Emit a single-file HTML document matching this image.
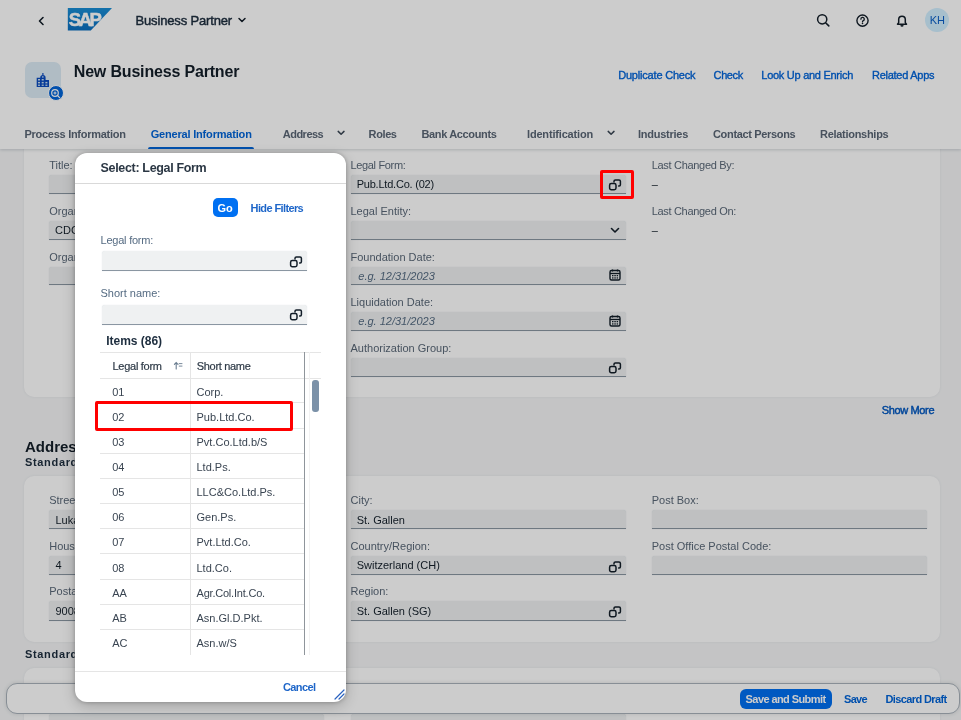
<!DOCTYPE html>
<html><head><meta charset="utf-8">
<style>
*{box-sizing:border-box;margin:0;padding:0}
html,body{width:961px;height:720px;overflow:hidden}
body{position:relative;background:#f5f6f7;font-family:"Liberation Sans",sans-serif;color:#131e29}
.a{position:absolute}
.t{position:absolute;white-space:nowrap}
.panel{position:absolute;background:#fff;border-radius:10px;box-shadow:0 0 3px rgba(34,53,72,.08)}
.inp{position:absolute;background:#eff1f2;border-radius:3px 3px 0 0;border-bottom:1px solid #8a96a2;box-shadow:0 0 1px rgba(85,107,129,.25),0 1px 0 rgba(255,255,255,.35)}
.ico{position:absolute}
#page,#dlg{will-change:transform}
#overlay{position:absolute;left:0;top:0;width:961px;height:720px;background:rgba(0,0,0,.2)}
#dlg{position:absolute;left:75px;top:153px;width:271px;height:549px;background:#fff;border-radius:12px;box-shadow:0 0 4px rgba(0,0,0,.25),0 4px 14px rgba(0,0,0,.2);overflow:hidden}
#dlg .t{}
.red{position:absolute;border:3px solid #f00;border-radius:2px}
</style></head>
<body>
<!-- page background content -->
<div id="page" class="a" style="left:0;top:0;width:961px;height:720px">
  <!-- panels -->
  <div class="panel" style="left:24px;top:120px;width:916px;height:277px"></div>
  <div class="panel" style="left:24px;top:476px;width:916px;height:166px"></div>
  <div class="panel" style="left:24px;top:668px;width:916px;height:80px"></div>

  <!-- section 1 inputs -->
  <div class="inp" style="left:49px;top:175.0px;width:275px;height:18.8px"></div>
  <div class="inp" style="left:49px;top:220.8px;width:275px;height:18.8px"></div>
  <div class="inp" style="left:49px;top:266.6px;width:275px;height:18.8px"></div>
  <div class="inp" style="left:351px;top:175.0px;width:275px;height:18.8px"></div>
  <div class="inp" style="left:351px;top:220.8px;width:275px;height:18.8px"></div>
  <div class="inp" style="left:351px;top:266.6px;width:275px;height:18.8px"></div>
  <div class="inp" style="left:351px;top:312.4px;width:275px;height:18.8px"></div>
  <div class="inp" style="left:351px;top:358.2px;width:275px;height:18.8px"></div>

  <!-- address inputs -->
  <div class="inp" style="left:49px;top:509.8px;width:275px;height:19.5px"></div>
  <div class="inp" style="left:49px;top:555.5px;width:275px;height:19.5px"></div>
  <div class="inp" style="left:49px;top:601.2px;width:275px;height:19.5px"></div>
  <div class="inp" style="left:351px;top:509.8px;width:275px;height:19.5px"></div>
  <div class="inp" style="left:351px;top:555.5px;width:275px;height:19.5px"></div>
  <div class="inp" style="left:351px;top:601.2px;width:275px;height:19.5px"></div>
  <div class="inp" style="left:652px;top:509.8px;width:275px;height:19.5px"></div>
  <div class="inp" style="left:652px;top:555.5px;width:275px;height:19.5px"></div>
  <!-- panel3 input peek -->
  <div class="inp" style="left:351px;top:714px;width:275px;height:20px"></div>
  <div class="inp" style="left:49px;top:714px;width:275px;height:20px"></div>

  <!-- page icons -->
  <svg class="ico" style="left:607px;top:177px" width="16" height="16" viewBox="0 0 16 16"><path d="M7 5V4.3a1.4 1.4 0 0 1 1.4-1.4H12a1.4 1.4 0 0 1 1.4 1.4V7.8a1.2 1.2 0 0 1-1.2 1.2H11.6" fill="none" stroke="#131e29" stroke-width="1.5" stroke-linecap="round"/><rect x="2.6" y="6.6" width="6.4" height="6.2" rx="1.7" fill="none" stroke="#131e29" stroke-width="1.5"/></svg>
  <svg class="ico" style="left:608px;top:222.5px" width="14" height="14" viewBox="0 0 14 14"><path d="M3.5 5.5l3.5 3.5 3.5-3.5" fill="none" stroke="#131e29" stroke-width="1.6" stroke-linecap="round" stroke-linejoin="round"/></svg>
  <svg class="ico" style="left:608px;top:268px" width="14" height="14" viewBox="0 0 14 14"><rect x="2" y="2.5" width="10" height="9.5" rx="1.5" fill="none" stroke="#131e29" stroke-width="1.4"/><path d="M2 5.5h10" stroke="#131e29" stroke-width="1.4"/><path d="M4.5 1.5v2M9.5 1.5v2" stroke="#131e29" stroke-width="1.3"/><rect x="4" y="7" width="1.5" height="1.3" fill="#131e29"/><rect x="6.3" y="7" width="1.5" height="1.3" fill="#131e29"/><rect x="8.6" y="7" width="1.5" height="1.3" fill="#131e29"/><rect x="4" y="9.3" width="1.5" height="1.3" fill="#131e29"/><rect x="6.3" y="9.3" width="1.5" height="1.3" fill="#131e29"/><rect x="8.6" y="9.3" width="1.5" height="1.3" fill="#131e29"/></svg>
  <svg class="ico" style="left:608px;top:313.5px" width="14" height="14" viewBox="0 0 14 14"><rect x="2" y="2.5" width="10" height="9.5" rx="1.5" fill="none" stroke="#131e29" stroke-width="1.4"/><path d="M2 5.5h10" stroke="#131e29" stroke-width="1.4"/><path d="M4.5 1.5v2M9.5 1.5v2" stroke="#131e29" stroke-width="1.3"/><rect x="4" y="7" width="1.5" height="1.3" fill="#131e29"/><rect x="6.3" y="7" width="1.5" height="1.3" fill="#131e29"/><rect x="8.6" y="7" width="1.5" height="1.3" fill="#131e29"/><rect x="4" y="9.3" width="1.5" height="1.3" fill="#131e29"/><rect x="6.3" y="9.3" width="1.5" height="1.3" fill="#131e29"/><rect x="8.6" y="9.3" width="1.5" height="1.3" fill="#131e29"/></svg>
  <svg class="ico" style="left:607px;top:359.5px" width="16" height="16" viewBox="0 0 16 16"><path d="M7 5V4.3a1.4 1.4 0 0 1 1.4-1.4H12a1.4 1.4 0 0 1 1.4 1.4V7.8a1.2 1.2 0 0 1-1.2 1.2H11.6" fill="none" stroke="#131e29" stroke-width="1.5" stroke-linecap="round"/><rect x="2.6" y="6.6" width="6.4" height="6.2" rx="1.7" fill="none" stroke="#131e29" stroke-width="1.5"/></svg>
  <svg class="ico" style="left:607px;top:558.5px" width="16" height="16" viewBox="0 0 16 16"><path d="M7 5V4.3a1.4 1.4 0 0 1 1.4-1.4H12a1.4 1.4 0 0 1 1.4 1.4V7.8a1.2 1.2 0 0 1-1.2 1.2H11.6" fill="none" stroke="#131e29" stroke-width="1.5" stroke-linecap="round"/><rect x="2.6" y="6.6" width="6.4" height="6.2" rx="1.7" fill="none" stroke="#131e29" stroke-width="1.5"/></svg>
  <svg class="ico" style="left:607px;top:604px" width="16" height="16" viewBox="0 0 16 16"><path d="M7 5V4.3a1.4 1.4 0 0 1 1.4-1.4H12a1.4 1.4 0 0 1 1.4 1.4V7.8a1.2 1.2 0 0 1-1.2 1.2H11.6" fill="none" stroke="#131e29" stroke-width="1.5" stroke-linecap="round"/><rect x="2.6" y="6.6" width="6.4" height="6.2" rx="1.7" fill="none" stroke="#131e29" stroke-width="1.5"/></svg>

  <!-- header -->
  <div class="a" style="left:0;top:0;width:961px;height:149px;background:#fff;box-shadow:0 1px 3px rgba(34,53,72,.2)"></div>
  <!-- back arrow -->
  <svg class="ico" style="left:35px;top:14px" width="12" height="14" viewBox="0 0 12 14"><path d="M8 3.5L4.5 7 8 10.5" fill="none" stroke="#131e29" stroke-width="1.6" stroke-linecap="round" stroke-linejoin="round"/></svg>
  <!-- SAP logo -->
  <svg class="ico" style="left:67px;top:8px" width="46" height="23" viewBox="0 0 46 23"><defs><linearGradient id="sg" x1="0" y1="0" x2="0" y2="1"><stop offset="0" stop-color="#1a8fd6"/><stop offset="1" stop-color="#0b6fc0"/></linearGradient></defs><path d="M0.8 0H45L23.8 22.5H0.8Z" fill="url(#sg)"/><text x="1.7" y="18.4" font-family="Liberation Sans" font-weight="700" font-size="18.5" letter-spacing="-2.4" fill="#fff" stroke="#fff" stroke-width="0.5">SAP</text></svg>
  <svg class="ico" style="left:236px;top:14px" width="12" height="12" viewBox="0 0 12 12"><path d="M3 4.5l3 3 3-3" fill="none" stroke="#131e29" stroke-width="1.5" stroke-linecap="round" stroke-linejoin="round"/></svg>
  <!-- shell icons -->
  <svg class="ico" style="left:815px;top:12px" width="16" height="16" viewBox="0 0 16 16"><circle cx="7.2" cy="7.3" r="4.6" fill="none" stroke="#131e29" stroke-width="1.5"/><path d="M10.6 10.7l3.2 3.2" stroke="#131e29" stroke-width="1.6" stroke-linecap="round"/></svg>
  <svg class="ico" style="left:854px;top:12px" width="16" height="16" viewBox="0 0 16 16"><circle cx="8.5" cy="8.6" r="5.6" fill="none" stroke="#131e29" stroke-width="1.4"/><path d="M6.9 7.2a1.7 1.7 0 1 1 2.4 1.5c-.6.3-.8.6-.8 1.2" fill="none" stroke="#131e29" stroke-width="1.3" stroke-linecap="round"/><circle cx="8.5" cy="11.5" r=".8" fill="#131e29"/></svg>
  <svg class="ico" style="left:894px;top:12px" width="16" height="16" viewBox="0 0 16 16"><path d="M3.5 12.2h9l-1.2-1.6V7.5a3.3 3.3 0 0 0-6.6 0v3.1z" fill="none" stroke="#131e29" stroke-width="1.5" stroke-linejoin="round"/><path d="M6.8 13.3a1.3 1.3 0 0 0 2.4 0" fill="#131e29" stroke="#131e29" stroke-width="1.3"/></svg>
  <div class="a" style="left:925px;top:7.5px;width:24px;height:24px;border-radius:50%;background:#d1efff"></div>

  <!-- object header tile -->
  <div class="a" style="left:25px;top:62px;width:35.5px;height:35.5px;border-radius:7px;background:#dcebf5"></div>
  <svg class="ico" style="left:35px;top:72px" width="15" height="16" viewBox="0 0 15 16"><path d="M1.7 5.8H5.2A2.7 2.7 0 0 1 10.6 5.8V8H14V15H1.7Z" fill="#0a4bc0"/><path d="M7.9 1V3" stroke="#0a4bc0" stroke-width="1.2"/><g fill="#c8dff0"><rect x="3" y="7" width="2" height="1.5"/><rect x="6.7" y="7" width="2" height="1.5"/><rect x="3" y="9.9" width="2" height="1.5"/><rect x="6.7" y="9.9" width="2" height="1.5"/><rect x="10.4" y="9.9" width="2" height="1.5"/><rect x="3" y="12.6" width="2" height="1.3"/><rect x="6.7" y="12.6" width="2" height="1.3"/><rect x="10.4" y="12.6" width="2" height="1.3"/><rect x="7" y="4.3" width="1.6" height="1.3"/></g></svg>
  <div class="a" style="left:47.5px;top:84.8px;width:16.5px;height:16.5px;border-radius:50%;background:#0064d9;border:1px solid #fff"></div>
  <svg class="ico" style="left:49.3px;top:86.5px" width="13" height="13" viewBox="0 0 13 13"><circle cx="6" cy="6" r="3.3" fill="none" stroke="#fff" stroke-width="1.2"/><path d="M8.4 8.4l2.2 2.2" stroke="#fff" stroke-width="1.3" stroke-linecap="round"/><path d="M4.5 6h3M6 4.5v3" stroke="#fff" stroke-width="1"/></svg>

  <!-- tab chevrons & underline -->
  <svg class="ico" style="left:335px;top:128px" width="12" height="10" viewBox="0 0 12 10"><path d="M3.2 3.4l2.9 2.8 2.9-2.8" fill="none" stroke="#3a4654" stroke-width="1.5" stroke-linecap="round" stroke-linejoin="round"/></svg>
  <svg class="ico" style="left:605px;top:128px" width="12" height="10" viewBox="0 0 12 10"><path d="M3.2 3.4l2.9 2.8 2.9-2.8" fill="none" stroke="#3a4654" stroke-width="1.5" stroke-linecap="round" stroke-linejoin="round"/></svg>
  <div class="a" style="left:148px;top:146.8px;width:106px;height:2.4px;border-radius:2px 2px 0 0;background:#0064d9"></div>

  <div class="t" style="left:135.50px;top:14.40px;font-size:13px;line-height:13px;font-weight:400;font-style:normal;letter-spacing:-0.156px;color:#1d2d3e;;-webkit-text-stroke:0.45px #1d2d3e">Business Partner</div>
<div class="t" style="left:929.80px;top:14.89px;font-size:11px;line-height:11px;font-weight:400;font-style:normal;letter-spacing:-0.041px;color:#0a5fc8;">KH</div>
<div class="t" style="left:73.75px;top:63.61px;font-size:16px;line-height:16px;font-weight:700;font-style:normal;letter-spacing:-0.173px;color:#131e29;">New Business Partner</div>
<div class="t" style="left:618.20px;top:70.09px;font-size:11px;line-height:11px;font-weight:400;font-style:normal;letter-spacing:-0.193px;color:#0064d9;-webkit-text-stroke:0.35px #0064d9">Duplicate Check</div>
<div class="t" style="left:713.60px;top:70.09px;font-size:11px;line-height:11px;font-weight:400;font-style:normal;letter-spacing:-0.398px;color:#0064d9;-webkit-text-stroke:0.35px #0064d9">Check</div>
<div class="t" style="left:761.30px;top:70.09px;font-size:11px;line-height:11px;font-weight:400;font-style:normal;letter-spacing:-0.274px;color:#0064d9;-webkit-text-stroke:0.35px #0064d9">Look Up and Enrich</div>
<div class="t" style="left:872.00px;top:70.09px;font-size:11px;line-height:11px;font-weight:400;font-style:normal;letter-spacing:-0.261px;color:#0064d9;-webkit-text-stroke:0.35px #0064d9">Related Apps</div>
<div class="t" style="left:24.40px;top:129.39px;font-size:11px;line-height:11px;font-weight:700;font-style:normal;letter-spacing:-0.266px;color:#5a6675;">Process Information</div>
<div class="t" style="left:150.70px;top:129.39px;font-size:11px;line-height:11px;font-weight:700;font-style:normal;letter-spacing:-0.186px;color:#0064d9;">General Information</div>
<div class="t" style="left:282.80px;top:129.39px;font-size:11px;line-height:11px;font-weight:700;font-style:normal;letter-spacing:-0.519px;color:#5a6675;">Address</div>
<div class="t" style="left:368.60px;top:129.39px;font-size:11px;line-height:11px;font-weight:700;font-style:normal;letter-spacing:-0.394px;color:#5a6675;">Roles</div>
<div class="t" style="left:421.50px;top:129.39px;font-size:11px;line-height:11px;font-weight:700;font-style:normal;letter-spacing:-0.359px;color:#5a6675;">Bank Accounts</div>
<div class="t" style="left:527.00px;top:129.39px;font-size:11px;line-height:11px;font-weight:700;font-style:normal;letter-spacing:-0.175px;color:#5a6675;">Identification</div>
<div class="t" style="left:638.00px;top:129.39px;font-size:11px;line-height:11px;font-weight:700;font-style:normal;letter-spacing:-0.258px;color:#5a6675;">Industries</div>
<div class="t" style="left:713.00px;top:129.39px;font-size:11px;line-height:11px;font-weight:700;font-style:normal;letter-spacing:-0.335px;color:#5a6675;">Contact Persons</div>
<div class="t" style="left:820.00px;top:129.39px;font-size:11px;line-height:11px;font-weight:700;font-style:normal;letter-spacing:-0.287px;color:#5a6675;">Relationships</div>
<div class="t" style="left:49.20px;top:160.09px;font-size:11px;line-height:11px;font-weight:400;font-style:normal;letter-spacing:0.000px;color:#5a6878;">Title:</div>
<div class="t" style="left:49.20px;top:205.89px;font-size:11px;line-height:11px;font-weight:400;font-style:normal;letter-spacing:0.000px;color:#5a6878;">Organization Name:</div>
<div class="t" style="left:49.20px;top:251.69px;font-size:11px;line-height:11px;font-weight:400;font-style:normal;letter-spacing:0.000px;color:#5a6878;">Organization Name 2:</div>
<div class="t" style="left:55.00px;top:224.89px;font-size:11px;line-height:11px;font-weight:400;font-style:normal;letter-spacing:0.000px;color:#131e29;">CDC Corp</div>
<div class="t" style="left:350.50px;top:160.09px;font-size:11px;line-height:11px;font-weight:400;font-style:normal;letter-spacing:-0.337px;color:#5a6878;">Legal Form:</div>
<div class="t" style="left:350.50px;top:205.89px;font-size:11px;line-height:11px;font-weight:400;font-style:normal;letter-spacing:0.000px;color:#5a6878;">Legal Entity:</div>
<div class="t" style="left:350.50px;top:251.69px;font-size:11px;line-height:11px;font-weight:400;font-style:normal;letter-spacing:0.000px;color:#5a6878;">Foundation Date:</div>
<div class="t" style="left:350.50px;top:297.49px;font-size:11px;line-height:11px;font-weight:400;font-style:normal;letter-spacing:0.000px;color:#5a6878;">Liquidation Date:</div>
<div class="t" style="left:350.50px;top:343.29px;font-size:11px;line-height:11px;font-weight:400;font-style:normal;letter-spacing:0.000px;color:#5a6878;">Authorization Group:</div>
<div class="t" style="left:356.70px;top:179.39px;font-size:11px;line-height:11px;font-weight:400;font-style:normal;letter-spacing:-0.214px;color:#131e29;">Pub.Ltd.Co. (02)</div>
<div class="t" style="left:358.30px;top:270.69px;font-size:11px;line-height:11px;font-weight:400;font-style:italic;letter-spacing:0.000px;color:#556b82;">e.g. 12/31/2023</div>
<div class="t" style="left:358.30px;top:316.49px;font-size:11px;line-height:11px;font-weight:400;font-style:italic;letter-spacing:0.000px;color:#556b82;">e.g. 12/31/2023</div>
<div class="t" style="left:651.70px;top:160.09px;font-size:11px;line-height:11px;font-weight:400;font-style:normal;letter-spacing:-0.303px;color:#5a6878;">Last Changed By:</div>
<div class="t" style="left:651.70px;top:206.09px;font-size:11px;line-height:11px;font-weight:400;font-style:normal;letter-spacing:-0.312px;color:#5a6878;">Last Changed On:</div>
<div class="t" style="left:651.70px;top:179.09px;font-size:11px;line-height:11px;font-weight:400;font-style:normal;letter-spacing:0.000px;color:#131e29;">–</div>
<div class="t" style="left:651.70px;top:225.09px;font-size:11px;line-height:11px;font-weight:400;font-style:normal;letter-spacing:0.000px;color:#131e29;">–</div>
<div class="t" style="left:881.70px;top:404.99px;font-size:11px;line-height:11px;font-weight:400;font-style:normal;letter-spacing:-0.349px;color:#0057c0;;-webkit-text-stroke:0.45px #0057c0">Show More</div>
<div class="t" style="left:25.00px;top:439.40px;font-size:15px;line-height:15px;font-weight:700;font-style:normal;letter-spacing:0.000px;color:#131e29;">Address</div>
<div class="t" style="left:25.00px;top:457.39px;font-size:11px;line-height:11px;font-weight:700;font-style:normal;letter-spacing:0.664px;color:#1d2d3e;">Standard</div>
<div class="t" style="left:49.20px;top:495.09px;font-size:11px;line-height:11px;font-weight:400;font-style:normal;letter-spacing:0.000px;color:#5a6878;">Street:</div>
<div class="t" style="left:49.20px;top:540.79px;font-size:11px;line-height:11px;font-weight:400;font-style:normal;letter-spacing:0.000px;color:#5a6878;">House Number:</div>
<div class="t" style="left:49.20px;top:586.49px;font-size:11px;line-height:11px;font-weight:400;font-style:normal;letter-spacing:0.000px;color:#5a6878;">Postal Code:</div>
<div class="t" style="left:55.50px;top:514.79px;font-size:11px;line-height:11px;font-weight:400;font-style:normal;letter-spacing:0.000px;color:#131e29;">Lukasstrasse</div>
<div class="t" style="left:55.50px;top:560.49px;font-size:11px;line-height:11px;font-weight:400;font-style:normal;letter-spacing:0.000px;color:#131e29;">4</div>
<div class="t" style="left:55.50px;top:606.19px;font-size:11px;line-height:11px;font-weight:400;font-style:normal;letter-spacing:0.000px;color:#131e29;">9008</div>
<div class="t" style="left:350.50px;top:495.09px;font-size:11px;line-height:11px;font-weight:400;font-style:normal;letter-spacing:0.000px;color:#5a6878;">City:</div>
<div class="t" style="left:350.50px;top:540.79px;font-size:11px;line-height:11px;font-weight:400;font-style:normal;letter-spacing:0.000px;color:#5a6878;">Country/Region:</div>
<div class="t" style="left:350.50px;top:586.49px;font-size:11px;line-height:11px;font-weight:400;font-style:normal;letter-spacing:0.000px;color:#5a6878;">Region:</div>
<div class="t" style="left:356.70px;top:514.79px;font-size:11px;line-height:11px;font-weight:400;font-style:normal;letter-spacing:0.000px;color:#131e29;">St. Gallen</div>
<div class="t" style="left:356.70px;top:560.49px;font-size:11px;line-height:11px;font-weight:400;font-style:normal;letter-spacing:0.000px;color:#131e29;">Switzerland (CH)</div>
<div class="t" style="left:356.70px;top:606.19px;font-size:11px;line-height:11px;font-weight:400;font-style:normal;letter-spacing:0.000px;color:#131e29;">St. Gallen (SG)</div>
<div class="t" style="left:651.70px;top:495.09px;font-size:11px;line-height:11px;font-weight:400;font-style:normal;letter-spacing:0.000px;color:#5a6878;">Post Box:</div>
<div class="t" style="left:651.70px;top:540.79px;font-size:11px;line-height:11px;font-weight:400;font-style:normal;letter-spacing:0.000px;color:#5a6878;">Post Office Postal Code:</div>
<div class="t" style="left:25.00px;top:649.19px;font-size:11px;line-height:11px;font-weight:700;font-style:normal;letter-spacing:0.664px;color:#1d2d3e;">Standard</div>

  <!-- footer bar -->
  <div class="a" style="left:5.5px;top:683px;width:954px;height:31px;border-radius:11px;background:#fff;border:1px solid #a9b2bb;box-shadow:0 0 4px rgba(0,0,0,.12)"></div>
  <div class="a" style="left:739.5px;top:689px;width:92px;height:19.5px;border-radius:6px;background:#0070f2"></div>
  <div class="t" style="left:745.60px;top:693.59px;font-size:11px;line-height:11px;font-weight:700;font-style:normal;letter-spacing:-0.583px;color:#ffffff;">Save and Submit</div>
<div class="t" style="left:844.00px;top:693.59px;font-size:11px;line-height:11px;font-weight:700;font-style:normal;letter-spacing:-0.676px;color:#0064d9;">Save</div>
<div class="t" style="left:885.50px;top:693.59px;font-size:11px;line-height:11px;font-weight:700;font-style:normal;letter-spacing:-0.614px;color:#0064d9;">Discard Draft</div>
</div>

<div id="overlay"></div>

<!-- red annotation on page -->
<div class="red" style="left:600px;top:170px;width:34px;height:29px"></div>

<!-- dialog -->
<div id="dlg">
  <div class="a" style="left:0;top:30px;width:271px;height:1px;background:#d9d9d9"></div>
  <div class="a" style="left:137.8px;top:45.3px;width:25.6px;height:19px;border-radius:5px;background:#0070f2"></div>
  <div class="inp" style="left:27px;top:98.4px;width:204.5px;height:19.6px"></div>
  <div class="inp" style="left:27px;top:152px;width:204.5px;height:19.6px"></div>
  <svg class="ico" style="left:213px;top:100.5px" width="16" height="16" viewBox="0 0 16 16"><path d="M7 5V4.3a1.4 1.4 0 0 1 1.4-1.4H12a1.4 1.4 0 0 1 1.4 1.4V7.8a1.2 1.2 0 0 1-1.2 1.2H11.6" fill="none" stroke="#131e29" stroke-width="1.5" stroke-linecap="round"/><rect x="2.6" y="6.6" width="6.4" height="6.2" rx="1.7" fill="none" stroke="#131e29" stroke-width="1.5"/></svg>
  <svg class="ico" style="left:213px;top:154px" width="16" height="16" viewBox="0 0 16 16"><path d="M7 5V4.3a1.4 1.4 0 0 1 1.4-1.4H12a1.4 1.4 0 0 1 1.4 1.4V7.8a1.2 1.2 0 0 1-1.2 1.2H11.6" fill="none" stroke="#131e29" stroke-width="1.5" stroke-linecap="round"/><rect x="2.6" y="6.6" width="6.4" height="6.2" rx="1.7" fill="none" stroke="#131e29" stroke-width="1.5"/></svg>
  <!-- table lines -->
  <div class="a" style="left:25px;top:199px;width:221px;height:1px;background:#e5e5e5"></div>
  <div class="a" style="left:25px;top:225px;width:221px;height:1px;background:#e5e5e5"></div>
  <div class="a" style="left:25px;top:249.47px;width:204px;height:1px;background:#e5e5e5"></div><div class="a" style="left:25px;top:274.64px;width:204px;height:1px;background:#e5e5e5"></div><div class="a" style="left:25px;top:299.81px;width:204px;height:1px;background:#e5e5e5"></div><div class="a" style="left:25px;top:324.98px;width:204px;height:1px;background:#e5e5e5"></div><div class="a" style="left:25px;top:350.15px;width:204px;height:1px;background:#e5e5e5"></div><div class="a" style="left:25px;top:375.32px;width:204px;height:1px;background:#e5e5e5"></div><div class="a" style="left:25px;top:400.49px;width:204px;height:1px;background:#e5e5e5"></div><div class="a" style="left:25px;top:425.66px;width:204px;height:1px;background:#e5e5e5"></div><div class="a" style="left:25px;top:450.83px;width:204px;height:1px;background:#e5e5e5"></div><div class="a" style="left:25px;top:476.00px;width:204px;height:1px;background:#e5e5e5"></div>
  <div class="a" style="left:115px;top:199px;width:1px;height:303px;background:#e5e5e5"></div>
  <div class="a" style="left:229px;top:199px;width:1px;height:303px;background:#8f959b"></div>
  <div class="a" style="left:234px;top:199px;width:1px;height:303px;background:#f2f2f2"></div>
  <div class="a" style="left:237.3px;top:227px;width:6.3px;height:31.7px;border-radius:3px;background:#7b91a8"></div>
  <svg class="ico" style="left:97px;top:206px" width="12" height="12" viewBox="0 0 12 12"><path d="M4.2 10V3.6M2.4 5.3L4.2 3.5 6 5.3" fill="none" stroke="#6a7d90" stroke-width="1.1" stroke-linecap="round"/><path d="M6.8 4.6H10.4M6.8 7.1H10.4" stroke="#6a7d90" stroke-width="0.9"/></svg>
  <div class="a" style="left:0;top:517.5px;width:271px;height:1px;background:#e5e5e5"></div>
  <svg class="ico" style="left:258px;top:535px" width="12" height="12" viewBox="0 0 12 12"><path d="M2 11L11 2M6 11l5-5" stroke="#2a62c0" stroke-width="1.2" stroke-linecap="round"/></svg>
  <div class="t" style="left:25.60px;top:8.92px;font-size:12.5px;line-height:12.5px;font-weight:700;font-style:normal;letter-spacing:-0.336px;color:#2b3744;">Select: Legal Form</div>
<div class="t" style="left:142.50px;top:49.79px;font-size:11px;line-height:11px;font-weight:700;font-style:normal;letter-spacing:0.000px;color:#ffffff;">Go</div>
<div class="t" style="left:175.60px;top:50.09px;font-size:11px;line-height:11px;font-weight:700;font-style:normal;letter-spacing:-0.617px;color:#1e66c9;">Hide Filters</div>
<div class="t" style="left:25.60px;top:81.59px;font-size:11px;line-height:11px;font-weight:400;font-style:normal;letter-spacing:-0.239px;color:#556b82;">Legal form:</div>
<div class="t" style="left:25.50px;top:134.84px;font-size:11px;line-height:11px;font-weight:400;font-style:normal;letter-spacing:0.000px;color:#556b82;">Short name:</div>
<div class="t" style="left:31.25px;top:182.24px;font-size:12px;line-height:12px;font-weight:700;font-style:normal;letter-spacing:-0.028px;color:#1d2d3e;">Items (86)</div>
<div class="t" style="left:37.50px;top:208.09px;font-size:11px;line-height:11px;font-weight:400;font-style:normal;letter-spacing:-0.273px;color:#2e3a47;-webkit-text-stroke:0.2px #2e3a47">Legal form</div>
<div class="t" style="left:121.75px;top:208.09px;font-size:11px;line-height:11px;font-weight:400;font-style:normal;letter-spacing:-0.312px;color:#2e3a47;-webkit-text-stroke:0.2px #2e3a47">Short name</div>
<div class="t" style="left:37.20px;top:233.84px;font-size:11px;line-height:11px;font-weight:400;font-style:normal;letter-spacing:0.000px;color:#3a4552;">01</div>
<div class="t" style="left:121.50px;top:233.84px;font-size:11px;line-height:11px;font-weight:400;font-style:normal;letter-spacing:0.000px;color:#3a4552;">Corp.</div>
<div class="t" style="left:37.20px;top:258.94px;font-size:11px;line-height:11px;font-weight:400;font-style:normal;letter-spacing:0.000px;color:#3a4552;">02</div>
<div class="t" style="left:121.50px;top:258.94px;font-size:11px;line-height:11px;font-weight:400;font-style:normal;letter-spacing:0.000px;color:#3a4552;">Pub.Ltd.Co.</div>
<div class="t" style="left:37.20px;top:284.04px;font-size:11px;line-height:11px;font-weight:400;font-style:normal;letter-spacing:0.000px;color:#3a4552;">03</div>
<div class="t" style="left:121.50px;top:284.04px;font-size:11px;line-height:11px;font-weight:400;font-style:normal;letter-spacing:0.000px;color:#3a4552;">Pvt.Co.Ltd.b/S</div>
<div class="t" style="left:37.20px;top:309.14px;font-size:11px;line-height:11px;font-weight:400;font-style:normal;letter-spacing:0.000px;color:#3a4552;">04</div>
<div class="t" style="left:121.50px;top:309.14px;font-size:11px;line-height:11px;font-weight:400;font-style:normal;letter-spacing:0.000px;color:#3a4552;">Ltd.Ps.</div>
<div class="t" style="left:37.20px;top:334.24px;font-size:11px;line-height:11px;font-weight:400;font-style:normal;letter-spacing:0.000px;color:#3a4552;">05</div>
<div class="t" style="left:121.50px;top:334.24px;font-size:11px;line-height:11px;font-weight:400;font-style:normal;letter-spacing:0.000px;color:#3a4552;">LLC&amp;Co.Ltd.Ps.</div>
<div class="t" style="left:37.20px;top:359.34px;font-size:11px;line-height:11px;font-weight:400;font-style:normal;letter-spacing:0.000px;color:#3a4552;">06</div>
<div class="t" style="left:121.50px;top:359.34px;font-size:11px;line-height:11px;font-weight:400;font-style:normal;letter-spacing:0.000px;color:#3a4552;">Gen.Ps.</div>
<div class="t" style="left:37.20px;top:384.44px;font-size:11px;line-height:11px;font-weight:400;font-style:normal;letter-spacing:0.000px;color:#3a4552;">07</div>
<div class="t" style="left:121.50px;top:384.44px;font-size:11px;line-height:11px;font-weight:400;font-style:normal;letter-spacing:0.000px;color:#3a4552;">Pvt.Ltd.Co.</div>
<div class="t" style="left:37.20px;top:409.54px;font-size:11px;line-height:11px;font-weight:400;font-style:normal;letter-spacing:0.000px;color:#3a4552;">08</div>
<div class="t" style="left:121.50px;top:409.54px;font-size:11px;line-height:11px;font-weight:400;font-style:normal;letter-spacing:0.000px;color:#3a4552;">Ltd.Co.</div>
<div class="t" style="left:37.20px;top:434.64px;font-size:11px;line-height:11px;font-weight:400;font-style:normal;letter-spacing:0.000px;color:#3a4552;">AA</div>
<div class="t" style="left:121.50px;top:434.64px;font-size:11px;line-height:11px;font-weight:400;font-style:normal;letter-spacing:-0.210px;color:#3a4552;">Agr.Col.Int.Co.</div>
<div class="t" style="left:37.20px;top:459.74px;font-size:11px;line-height:11px;font-weight:400;font-style:normal;letter-spacing:0.000px;color:#3a4552;">AB</div>
<div class="t" style="left:121.50px;top:459.74px;font-size:11px;line-height:11px;font-weight:400;font-style:normal;letter-spacing:0.000px;color:#3a4552;">Asn.Gl.D.Pkt.</div>
<div class="t" style="left:37.20px;top:484.84px;font-size:11px;line-height:11px;font-weight:400;font-style:normal;letter-spacing:0.000px;color:#3a4552;">AC</div>
<div class="t" style="left:121.50px;top:484.84px;font-size:11px;line-height:11px;font-weight:400;font-style:normal;letter-spacing:0.000px;color:#3a4552;">Asn.w/S</div>
<div class="t" style="left:208.00px;top:529.09px;font-size:11px;line-height:11px;font-weight:700;font-style:normal;letter-spacing:-0.613px;color:#1e66c9;">Cancel</div>
</div>
<!-- red annotation on dialog row -->
<div class="red" style="left:95px;top:400.5px;width:197.5px;height:30px"></div>
</body></html>
